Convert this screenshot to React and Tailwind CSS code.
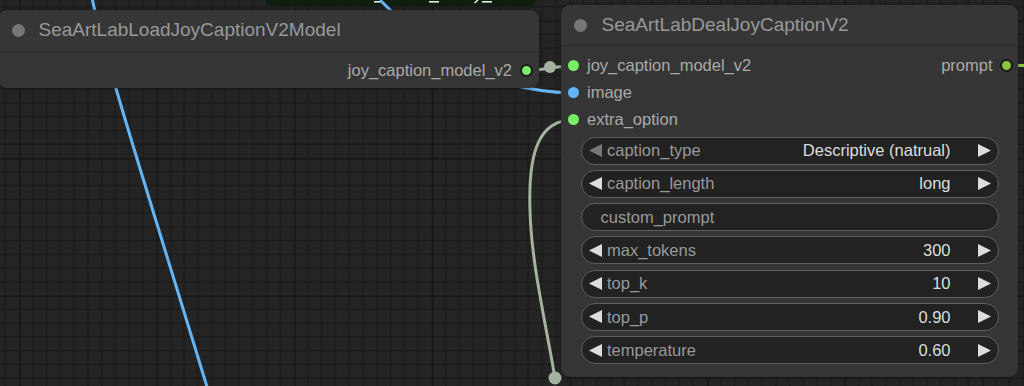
import React from "react";

const FONT = { fontFamily: '"Liberation Sans", Arial, sans-serif' };

const widgets = [
  { label: "caption_type", value: "Descriptive (natrual)", dimLeft: true },
  { label: "caption_length", value: "long" },
  { label: "custom_prompt", text: true },
  { label: "max_tokens", value: "300" },
  { label: "top_k", value: "10" },
  { label: "top_p", value: "0.90" },
  { label: "temperature", value: "0.60" },
];

function Arrow({ dir, color }) {
  const pts = dir === "left" ? "0,6.5 13,0 13,13" : "0,0 13,6.5 0,13";
  return (
    <svg width="13" height="13" viewBox="0 0 13 13" className="shrink-0">
      <polygon points={pts} fill={color} />
    </svg>
  );
}

function Widget({ w }) {
  if (w.text) {
    return (
      <div className="h-[28px] rounded-full border border-[#5f5f5f] bg-[#222222] flex items-center pl-[19px] text-[16.5px] text-[#999]">
        {w.label}
      </div>
    );
  }
  return (
    <div className="h-[28px] rounded-full border border-[#5f5f5f] bg-[#222222] flex items-center text-[16.5px]">
      <div className="ml-[7.5px]">
        <Arrow dir="left" color={w.dimLeft ? "#777777" : "#dddddd"} />
      </div>
      <span className="ml-[5px] text-[#999]">{w.label}</span>
      <span className="ml-auto text-[#dddddd]">{w.value}</span>
      <div className="ml-[27px] mr-[7px]">
        <Arrow dir="right" color="#dddddd" />
      </div>
    </div>
  );
}

function Dot({ color, ring }) {
  if (ring) {
    return (
      <div
        className="w-[13px] h-[13px] rounded-full border-2 border-[#1a1a1a] shrink-0"
        style={{ backgroundColor: color }}
      />
    );
  }
  return <div className="w-[11px] h-[11px] rounded-full shrink-0" style={{ backgroundColor: color }} />;
}

function Canvas() {
  const minor = [];
  for (let i = 1; i < 10; i++) {
    const p = i * 13.76;
    minor.push(<line key={"v" + i} x1={p} y1="0" x2={p} y2="137.6" stroke="#1b1b1b" strokeWidth="1.4" />);
    minor.push(<line key={"h" + i} x1="0" y1={p} x2="137.6" y2={p} stroke="#1b1b1b" strokeWidth="1.4" />);
  }
  return (
    <svg className="absolute inset-0" width="1024" height="386" viewBox="0 0 1024 386">
      <defs>
        <pattern id="grid" x="19" y="20.4" width="137.6" height="137.6" patternUnits="userSpaceOnUse">
          <rect width="137.6" height="137.6" fill="#242424" />
          {minor}
          <line x1="0" y1="0" x2="0" y2="137.6" stroke="#161616" strokeWidth="3" />
          <line x1="0" y1="0" x2="137.6" y2="0" stroke="#161616" strokeWidth="3" />
        </pattern>
      </defs>
      <rect width="1024" height="386" fill="url(#grid)" />

      {/* dark green node peeking from the top */}
      <rect x="265" y="-20" width="272" height="26" rx="8" fill="#0f1e0f" />
      <rect x="374" y="1" width="9" height="1.6" fill="#e8e8e8" />
      <rect x="429" y="1" width="10" height="1.6" fill="#e8e8e8" />
      <path d="M478 0 L474.5 3" stroke="#e8e8e8" strokeWidth="1.6" />
      <rect x="482" y="1" width="10" height="1.6" fill="#e8e8e8" />

      {/* wires */}
      <path d="M92 -2 C105 60, 150 200, 208 390" stroke="#64b5f6" strokeWidth="3" fill="none" />
      <path d="M380 0 C420 40, 470 90, 573 93" stroke="#64b5f6" strokeWidth="3" fill="none" />
      <path d="M527 71 C540 71, 545 67, 573 66" stroke="#a3b3a0" strokeWidth="3" fill="none" />
      <circle cx="550" cy="67" r="6" fill="#a3b3a0" />
      <path d="M573 120 C540 120, 528 150, 530 210 C531 260, 545 320, 555 378" stroke="#a3b3a0" strokeWidth="3" fill="none" />
      <circle cx="555" cy="378" r="6.5" fill="#a3b3a0" />
      <path d="M1006 65.5 L1030 65.5" stroke="#8cc63f" strokeWidth="3" fill="none" />
    </svg>
  );
}

export default function App() {
  return (
    <div className="relative w-[1024px] h-[386px] overflow-hidden bg-[#232323]" style={FONT}>
      <Canvas />

      {/* Load node */}
      <div className="absolute left-[-2px] top-[10px] w-[541px] h-[78px] rounded-[9px] bg-[#353535] shadow-[0_0_3px_rgba(0,0,0,0.5)] flex flex-col">
        <div className="h-[42px] flex items-center border-b border-[#2b2b2b] rounded-t-[9px] bg-[#363636]">
          <div className="ml-[13.5px] w-[13px] h-[13px] rounded-full bg-[#777]" />
          <span className="ml-[14px] text-[19px] text-[#999]">SeaArtLabLoadJoyCaptionV2Model</span>
        </div>
        <div className="pt-[5px] flex justify-end">
          <div className="h-[27px] flex items-center mr-[6px]">
            <span className="text-[16.5px] text-[#aaa]">joy_caption_model_v2</span>
            <div className="ml-[8px]">
              <Dot color="#77ee66" ring />
            </div>
          </div>
        </div>
      </div>

      {/* Deal node */}
      <div className="absolute left-[561px] top-[5px] w-[457px] h-[372px] rounded-[9px] bg-[#353535] shadow-[0_0_3px_rgba(0,0,0,0.5)] flex flex-col">
        <div className="h-[41px] flex items-center border-b border-[#2b2b2b] rounded-t-[9px] bg-[#363636] shrink-0">
          <div className="ml-[12.5px] w-[13px] h-[13px] rounded-full bg-[#777]" />
          <span className="ml-[15px] text-[19px] text-[#999]">SeaArtLabDealJoyCaptionV2</span>
        </div>
        <div className="pt-[6px] flex flex-col">
          <div className="h-[27px] flex items-center justify-between">
            <div className="flex items-center pl-[6.5px]">
              <Dot color="#77ee66" />
              <span className="ml-[8.5px] text-[16.5px] text-[#aaa]">joy_caption_model_v2</span>
            </div>
            <div className="flex items-center mr-[5.5px]">
              <span className="text-[16.5px] text-[#aaa]">prompt</span>
              <div className="ml-[7px]">
                <Dot color="#8cc63f" ring />
              </div>
            </div>
          </div>
          <div className="h-[27px] flex items-center pl-[6.5px]">
            <Dot color="#64b5f6" />
            <span className="ml-[8.5px] text-[16.5px] text-[#aaa]">image</span>
          </div>
          <div className="h-[27px] flex items-center pl-[6.5px]">
            <Dot color="#77ee66" />
            <span className="ml-[8.5px] text-[16.5px] text-[#aaa]">extra_option</span>
          </div>
        </div>
        <div className="mt-[3.5px] mx-[19.5px] flex flex-col gap-[5.3px]">
          {widgets.map((w) => (
            <Widget key={w.label} w={w} />
          ))}
        </div>
      </div>
    </div>
  );
}
